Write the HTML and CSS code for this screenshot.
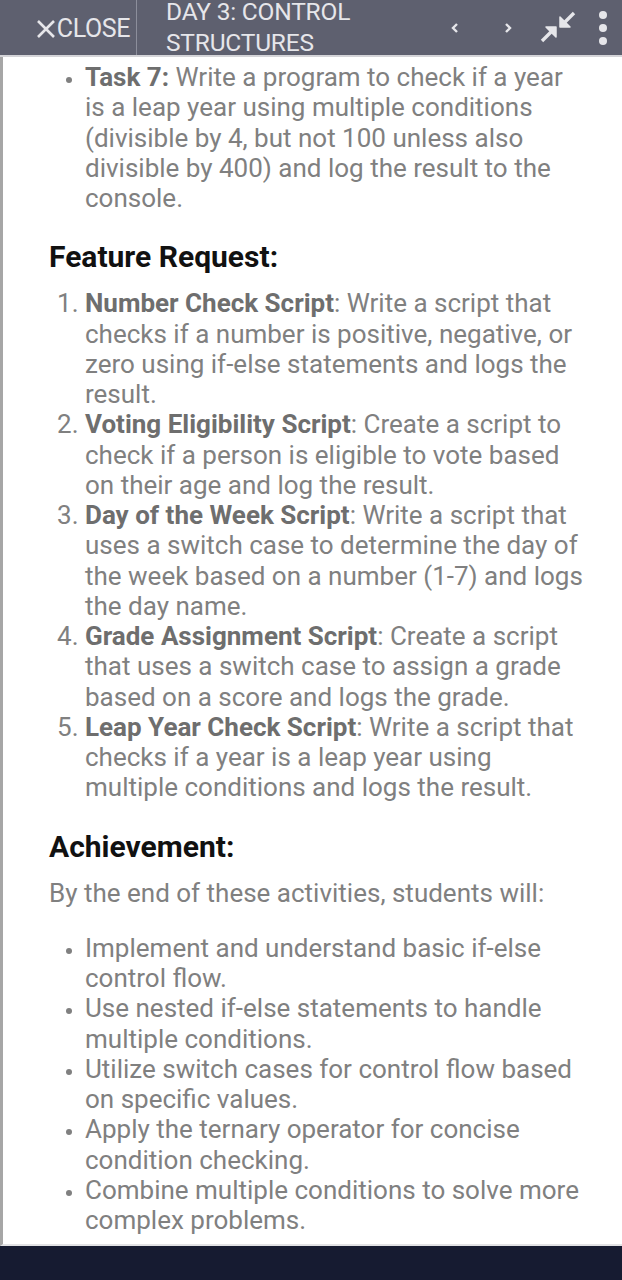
FILE: index.html
```html
<!DOCTYPE html>
<html>
<head>
<meta charset="utf-8">
<link rel="stylesheet" href="styles.css">
</head>
<body>
<header class="topbar">
  <div class="close">
    <svg class="close-x" width="20" height="20" viewBox="0 0 20 20"><path d="M2 2 L18 18 M18 2 L2 18" stroke="#e6e6ea" stroke-width="2.6" fill="none"/></svg>
    <span>CLOSE</span>
  </div>
  <div class="title">DAY 3: CONTROL<br>STRUCTURES</div>
  <div class="tools">
    <svg class="chev prev" width="10" height="12" viewBox="0 0 10 12"><path d="M7 2 L3 6 L7 10" stroke="#e6e6ea" stroke-width="2.4" fill="none"/></svg>
    <svg class="chev" width="10" height="12" viewBox="0 0 10 12"><path d="M3 2 L7 6 L3 10" stroke="#e6e6ea" stroke-width="2.4" fill="none"/></svg>
    <svg class="shrink" width="36" height="32" viewBox="0 0 36 32">
      <path d="M34 2 L24 12" stroke="#e6e6ea" stroke-width="3.4" fill="none"/>
      <path d="M20 6 L20 16 L30 16 Z" fill="#e6e6ea" stroke="#e6e6ea" stroke-width="1.5" stroke-linejoin="round"/>
      <path d="M2 30 L12 20" stroke="#e6e6ea" stroke-width="3.4" fill="none"/>
      <path d="M6 16 L16 16 L16 26 Z" fill="#e6e6ea" stroke="#e6e6ea" stroke-width="1.5" stroke-linejoin="round"/>
    </svg>
    <div class="dots"><i></i><i></i><i></i></div>
  </div>
</header>
<main class="content">
  <ul class="bullets top">
    <li><b>Task 7:</b> Write a program to check if a year is a leap year using multiple conditions (divisible by 4, but not 100 unless also divisible by 400) and log the result to the console.</li>
  </ul>
  <h3>Feature Request:</h3>
  <ol class="numbers">
    <li><b>Number Check Script</b>: Write a script that checks if a number is positive, negative, or zero using if-else statements and logs the result.</li>
    <li><b>Voting Eligibility Script</b>: Create a script to check if a person is eligible to vote based on their age and log the result.</li>
    <li><b>Day of the Week Script</b>: Write a script that uses a switch case to determine the day of the week based on a number (1-7) and logs the day name.</li>
    <li><b>Grade Assignment Script</b>: Create a script that uses a switch case to assign a grade based on a score and logs the grade.</li>
    <li><b>Leap Year Check Script</b>: Write a script that checks if a year is a leap year using multiple conditions and logs the result.</li>
  </ol>
  <h3>Achievement:</h3>
  <p>By the end of these activities, students will:</p>
  <ul class="bullets">
    <li>Implement and understand basic if-else control flow.</li>
    <li>Use nested if-else statements to handle multiple conditions.</li>
    <li>Utilize switch cases for control flow based on specific values.</li>
    <li>Apply the ternary operator for concise condition checking.</li>
    <li>Combine multiple conditions to solve more complex problems.</li>
  </ul>
</main>
<footer class="bottombar"></footer>
</body>
</html>
```

FILE: styles.css
```css
html, body {
  margin: 0;
  padding: 0;
  background: #ffffff;
}
body {
  font-family: Roboto, "Liberation Sans", sans-serif;
  width: 622px;
  height: 1280px;
  overflow: hidden;
  display: flex;
  flex-direction: column;
}
.topbar {
  height: 55px;
  flex: none;
  background: #5e606f;
  color: #e6e6ea;
  display: flex;
  align-items: stretch;
  overflow: hidden;
  border-bottom: 2px solid #d4d4d8;
}
.close {
  width: 137px;
  box-sizing: border-box;
  border-right: 1px solid #8c8e9b;
  display: flex;
  align-items: center;
  justify-content: flex-end;
  padding-right: 6px;
  padding-top: 2px;
  font-size: 25px;
  letter-spacing: -0.4px;
}
.close-x {
  margin-right: 1px;
}
.title {
  margin-left: 29px;
  margin-top: -4px;
  font-size: 24.5px;
  line-height: 31px;
  letter-spacing: -0.2px;
}
.tools {
  margin-left: auto;
  display: flex;
  align-items: center;
  padding-right: 15px;
}
.chev.prev {
  margin-right: 43px;
}
.shrink {
  margin-left: 27px;
  margin-right: 23px;
  margin-top: -2px;
}
.dots {
  display: flex;
  flex-direction: column;
  gap: 5px;
}
.dots i {
  width: 8px;
  height: 8px;
  border-radius: 50%;
  background: #e6e6ea;
}
.content {
  flex: 1;
  border-left: 3px solid #a6a6a6;
  padding: 5px 37px 0 46px;
  color: #808080;
  font-size: 26px;
  line-height: 30.25px;
  border-bottom: 2px solid #e2e2e4;
  overflow: hidden;
}
.content b {
  color: #6e6e6e;
  font-weight: 700;
}
.content h3 {
  color: #111111;
  font-size: 30px;
  line-height: 32px;
  font-weight: 700;
  margin: 28px 0 15px;
}
.content p {
  margin: 0 0 25px;
}
.content ul, .content ol {
  margin: 0;
  padding-left: 36px;
}
.numbers li::marker {
  color: #808080;
}
.bullets li::marker {
  color: #808080;
  font-size: 21px;
}
.bottombar {
  height: 34px;
  flex: none;
  background: #161b31;
}
```
